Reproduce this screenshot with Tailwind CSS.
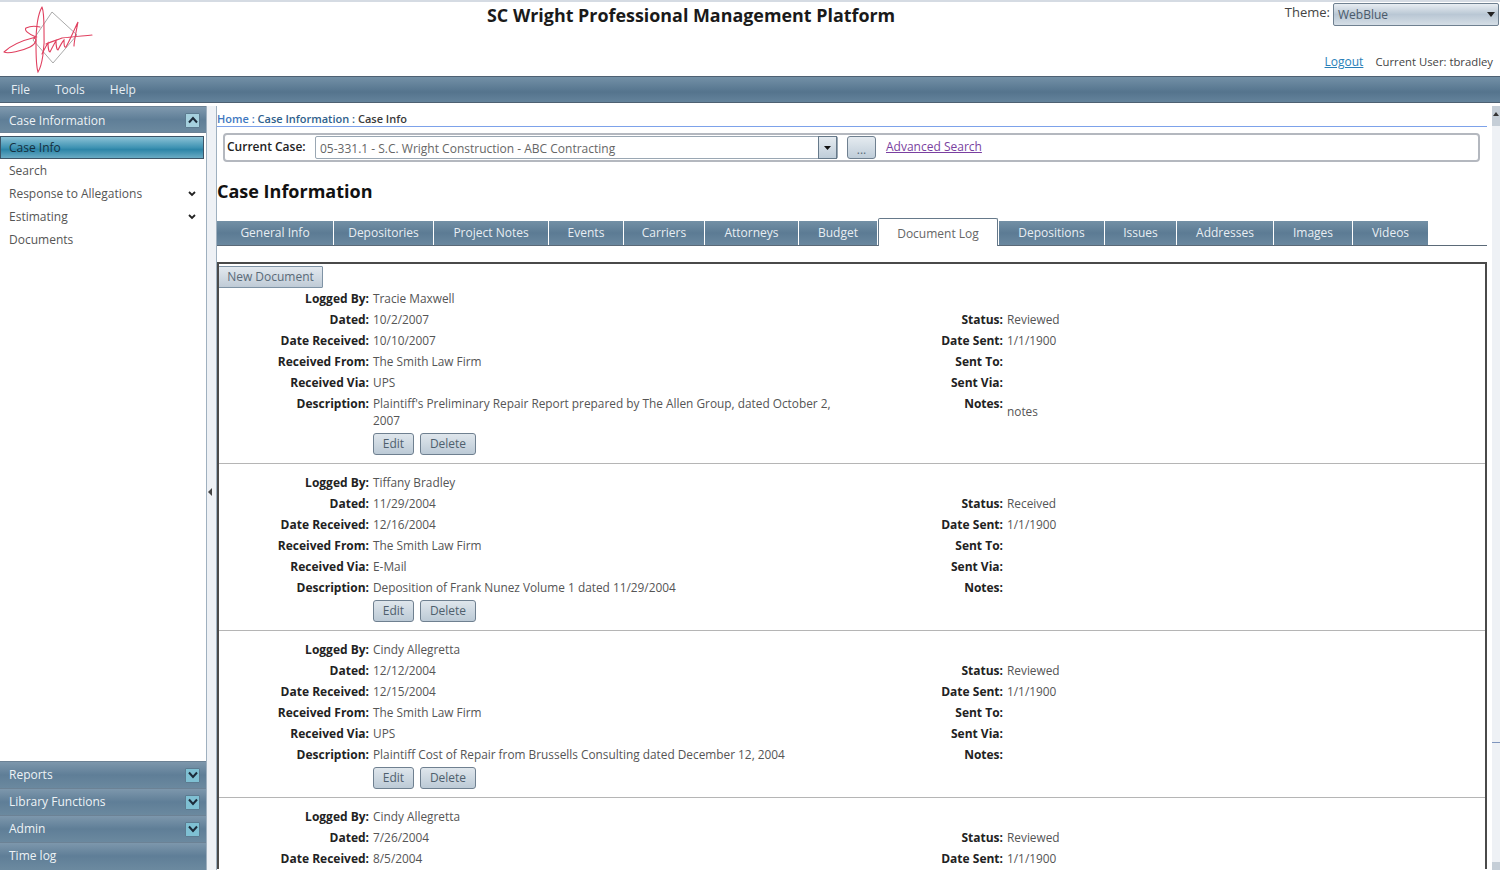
<!DOCTYPE html>
<html lang="en">
<head>
  <meta charset="UTF-8" />
  <title>SC Wright Professional Management Platform</title>
  <script src="https://cdn.jsdelivr.net/npm/@tailwindcss/browser@4"></script>
</head>
<body class="h-[870px] w-[1500px] overflow-hidden bg-white font-['Open_Sans',sans-serif] text-[12px] text-[#555]">

  <!-- Header -->
  <header class="relative flex h-[76px] border-t-2 border-[#d5dbe3]">
    <!-- signature logo, coordinates are page pixels minus the 2px top border -->
    <svg class="h-[74px] w-[96px]" viewBox="0 2 96 74" fill="none">
      <path d="M52 12 L77 35 L53 63 L33 40 Z" stroke="#a9a9a9" stroke-width="1" />
      <g stroke="#e0405f" stroke-width="1.1" stroke-linecap="round">
        <path d="M42 7 C38 14 36 30 36 44 C36 56 36 66 38 72 C42 66 45 48 44 30 C44 20 44 12 42 7" />
        <path d="M4 52 C12 44 24 40 36 37 C28 34 24 30 26 28 C30 26 36 26 40 27 M33 38 C38 38 36 44 30 47 C22 51 8 54 4 52" />
        <path d="M42 54 C44 50 46 46 48 43 C48 48 49 52 50 52 C52 48 54 44 56 41 C56 46 57 50 58 50 C60 46 62 42 64 40 C64 44 64 48 66 47 C70 40 74 30 78 22 C76 32 74 42 74 46" />
        <path d="M46 44 C52 41 58 40 62 38 C70 37 82 36 92 35" />
      </g>
    </svg>
    <h1 class="absolute left-[487px] top-[0px] text-[17.9px] leading-[26px] font-bold whitespace-nowrap text-[#1a1a1a]">SC Wright Professional Management Platform</h1>
    <div class="absolute right-[1px] top-[1px] flex items-start gap-[3px]">
      <span class="text-[13px] leading-[18px] text-[#444]">Theme:</span>
      <div class="flex h-[23px] w-[166px] items-center justify-between rounded-[2px] border border-[#6f8090] bg-[linear-gradient(#e8edf2,#b9c7d4_50%,#d5dee6)] pl-[4px] pr-[3px] text-[#4a5a6a]">
        <span>WebBlue</span>
        <svg class="h-[5px] w-[8px]" viewBox="0 0 8 5"><path d="M0 0h8L4 5z" fill="#222" /></svg>
      </div>
    </div>
    <div class="absolute right-[7px] top-[51px] flex items-baseline gap-[12px] leading-[18px]">
      <a class="text-[#2a7fb8] underline">Logout</a>
      <span class="text-[11.3px] text-[#444]">Current User: tbradley</span>
    </div>
  </header>

  <!-- Menu bar -->
  <nav class="flex h-[27px] items-center gap-[25px] border-y border-[#4d6072] bg-[linear-gradient(#7390a6,#5c7b94_45%,#55748d_60%,#64839b)] pl-[11px] text-[12px] text-[#e8eef3]">
    <span>File</span><span>Tools</span><span>Help</span>
  </nav>

  <div class="mt-[3px] flex h-[764px]">

    <!-- Sidebar -->
    <aside class="flex w-[207px] flex-col border-r border-[#9fb0bf]">
      <div class="flex h-[27px] shrink-0 items-center justify-between border-y border-[#6c8295] bg-[linear-gradient(#7f99ae,#5f7e97_50%,#6b899f)] pl-[9px] pr-[6px] pt-[1px] text-[12px] text-[#eef3f6]">
        <span class="translate-y-px">Case Information</span>
        <span class="flex h-[15px] w-[15px] items-center justify-center rounded-[1px] border border-[#5c7b90] bg-[#a5d0de]">
          <svg class="h-[8px] w-[10px]" viewBox="0 0 10 8" fill="none"><path d="M1 6.5 5 2l4 4.5" stroke="#1c2b3a" stroke-width="2" /></svg>
        </span>
      </div>
      <div class="flex flex-1 flex-col">
        <div class="mr-[2px] mt-[3px] flex h-[23px] items-center border border-[#3d5568] bg-[linear-gradient(#8cc2d6,#3f93b3_50%,#2d85a8_60%,#6aabc4)] pl-[8px] text-[#15303f]">Case Info</div>
        <div class="flex h-[23px] items-center pl-[9px]">Search</div>
        <div class="flex h-[23px] items-center justify-between pl-[9px] pr-[10px]">Response to Allegations
          <svg class="h-[6px] w-[8px]" viewBox="0 0 8 6" fill="none"><path d="M1 1l3 3 3-3" stroke="#222" stroke-width="1.8" /></svg>
        </div>
        <div class="flex h-[23px] items-center justify-between pl-[9px] pr-[10px]">Estimating
          <svg class="h-[6px] w-[8px]" viewBox="0 0 8 6" fill="none"><path d="M1 1l3 3 3-3" stroke="#222" stroke-width="1.8" /></svg>
        </div>
        <div class="flex h-[23px] items-center pl-[9px]">Documents</div>
      </div>
      <div id="bottomPanels" class="bg-[#6b899f] pb-[1px]"></div>
    </aside>

    <!-- Splitter -->
    <div class="flex w-[10px] items-center border-r border-[#9fb0bf] bg-[#eef1f5] pl-[1px] pt-[8px]">
      <svg class="h-[8px] w-[4px]" viewBox="0 0 4 8"><path d="M4 0v8L0 4z" fill="#444" /></svg>
    </div>

    <!-- Main content -->
    <main class="w-[1270px] shrink-0">
      <div class="flex h-[21px] items-end border-b border-[#7da2ea] text-[11px] leading-[15px] font-semibold text-[#3a3a3a]">
        <span class="text-[#3f78c0]">Home :&nbsp;</span><span class="text-[#2f5f8c]">Case Information :&nbsp;</span><span>Case Info</span>
      </div>

      <div class="ml-[6px] mt-[6px] flex h-[29px] w-[1257px] items-center rounded-[4px] border-2 border-[#b4b8bf] pl-[2px]">
        <b class="w-[88px] -translate-y-px font-semibold text-[#222]">Current Case:</b>
        <div class="flex h-[23px] w-[523px] items-center justify-between rounded-[2px] border border-[#9aa7b3] pl-[4px] text-[#666]">
          <span class="translate-y-px">05-331.1 - S.C. Wright Construction - ABC Contracting</span>
          <span class="flex h-[23px] w-[19px] items-center justify-center border border-[#66798a] bg-[linear-gradient(#e5ebf0,#bfcdd9)]">
            <svg class="h-[4px] w-[7px]" viewBox="0 0 7 4"><path d="M0 0h7L3.500 4z" fill="#111" /></svg>
          </span>
        </div>
        <button class="ml-[9px] h-[23px] w-[29px] rounded-[3px] border border-[#6f8090] bg-[linear-gradient(#e5ebf0,#bfcdd9)] leading-[26px] text-[#5a6a78]">...</button>
        <a class="ml-[10px] -translate-y-px text-[#7a3fa0] underline">Advanced Search</a>
      </div>

      <h2 class="mt-[14px] text-[18px] leading-[30px] font-bold text-[#111]">Case Information</h2>

      <div id="tabs" class="mt-[12px] flex h-[28px] items-end gap-[1px] border-b border-[#5b6a78]"></div>

      <div class="mt-[16px] h-[607px] overflow-hidden border-2 border-b-0 border-[#4a4a4a]">
        <button class="-ml-[1px] mt-[2px] block h-[22px] w-[105px] rounded-[1px] border border-[#7f93a5] bg-[linear-gradient(#e3e9ef,#bfcbd6)] text-[#5a6a78]">New Document</button>
        <div id="records"></div>
      </div>
    </main>

    <!-- Scrollbar -->
    <div class="ml-[5px] flex w-[8px] flex-col bg-[#eef1f5]">
      <div class="flex h-[20px] items-start justify-center bg-[#c5ced7] pt-[6px]">
        <svg class="h-[4px] w-[6px]" viewBox="0 0 6 4"><path d="M0 4h6L3 0z" fill="#333" /></svg>
      </div>
      <div class="h-[617px] border-b border-[#7f95bd]"></div>
      <div class="mt-auto flex h-[8px] items-end justify-center bg-[#c5ced7]"></div>
    </div>
  </div>

  <script>
    const panels = [['Reports', true], ['Library Functions', true], ['Admin', true], ['Time log', false]];
    document.getElementById('bottomPanels').innerHTML = panels.map(([name, hasToggle]) => `
      <div class="flex h-[27px] items-center justify-between border-t border-[#6c8295] bg-[linear-gradient(#7d97ac,#5f7e97_50%,#6b899f)] pl-[9px] pr-[6px] text-[12px] text-[#eef3f6]">
        <span>${name}</span>
        ${hasToggle ? `<span class="flex h-[15px] w-[15px] items-center justify-center rounded-[1px] border border-[#5c7b90] bg-[#7fc0d3]">
          <svg class="h-[8px] w-[10px]" viewBox="0 0 10 8" fill="none"><path d="M1 1.500 5 6l4-4.500" stroke="#1c2b3a" stroke-width="2" /></svg>
        </span>` : ''}
      </div>`).join('');

    const tabs = [['General Info', 116], ['Depositories', 99], ['Project Notes', 114], ['Events', 74], ['Carriers', 80], ['Attorneys', 93], ['Budget', 78], ['Document Log', 120], ['Depositions', 105], ['Issues', 71], ['Addresses', 96], ['Images', 78], ['Videos', 75]];
    document.getElementById('tabs').innerHTML = tabs.map(([name, width]) => name === 'Document Log'
      ? `<div style="width:${width}px" class="relative -mb-[1px] flex h-[28px] items-center justify-center rounded-t-[2px] border border-b-0 border-[#66798a] bg-white pt-[2px] text-[#666]">${name}</div>`
      : `<div style="width:${width}px" class="flex h-[24px] items-center justify-center bg-[linear-gradient(#7390a6,#5c7b94_50%,#6a889f)] text-[#e8eef3]">${name}</div>`).join('');

    const records = [
      { by: 'Tracie Maxwell', dated: '10/2/2007', received: '10/10/2007', from: 'The Smith Law Firm', via: 'UPS', desc: "Plaintiff's Preliminary Repair Report prepared by The Allen Group, dated October 2, 2007", status: 'Reviewed', notes: 'notes' },
      { by: 'Tiffany Bradley', dated: '11/29/2004', received: '12/16/2004', from: 'The Smith Law Firm', via: 'E-Mail', desc: 'Deposition of Frank Nunez Volume 1 dated 11/29/2004', status: 'Received', notes: '' },
      { by: 'Cindy Allegretta', dated: '12/12/2004', received: '12/15/2004', from: 'The Smith Law Firm', via: 'UPS', desc: 'Plaintiff Cost of Repair from Brussells Consulting dated December 12, 2004', status: 'Reviewed', notes: '' },
      // last record runs off the window, only its first rows show
      { by: 'Cindy Allegretta', dated: '7/26/2004', received: '8/5/2004', status: 'Reviewed', cut: true }
    ];

    function row(l1, v1, l2, v2, extra) {
      return `<div class="grid grid-cols-[150px_467px_159px_1fr] gap-x-[4px] py-[2px] text-[11.85px] leading-[17px]">
        <b class="text-right text-[12px] font-bold text-[#222]">${l1}</b><span>${v1}</span>
        <b class="text-right text-[12px] font-bold text-[#222]">${l2}</b><span class="${extra || ''}">${v2}</span>
      </div>`;
    }

    document.getElementById('records').innerHTML = records.map((r, i) => {
      const top = `
        ${row('Logged By:', r.by, '', '')}
        ${row('Dated:', r.dated, 'Status:', r.status)}
        ${row('Date Received:', r.received, 'Date Sent:', '1/1/1900')}`;
      if (r.cut) return `<div class="pt-[8px]">${top}</div>`;
      return `
      <div class="${i === 0 ? '' : 'pt-[8px]'} pb-[8px] border-b border-[#b5b5b5]">
        ${top}
        ${row('Received From:', r.from, 'Sent To:', '')}
        ${row('Received Via:', r.via, 'Sent Via:', '')}
        ${row('Description:', r.desc, 'Notes:', r.notes, 'pt-[8px]')}
        <div class="ml-[154px] mt-[2px] flex gap-[6px]">
          <button class="h-[22px] w-[41px] rounded-[3px] border border-[#6f8090] bg-[linear-gradient(#dfe6ec,#bccad6)] text-[#4f5f6d]">Edit</button>
          <button class="h-[22px] w-[56px] rounded-[3px] border border-[#6f8090] bg-[linear-gradient(#dfe6ec,#bccad6)] text-[#4f5f6d]">Delete</button>
        </div>
      </div>`;
    }).join('');
  </script>
</body>
</html>
